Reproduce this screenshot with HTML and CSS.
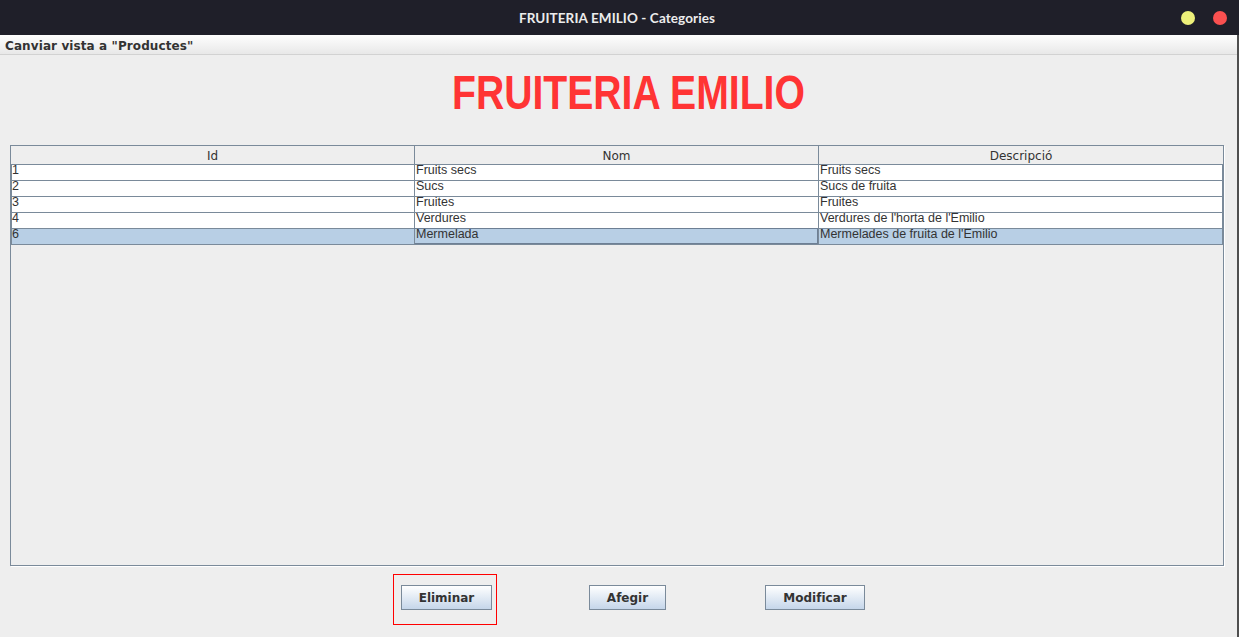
FILE: index.html
```html
<!DOCTYPE html>
<html lang="ca">
<head>
<meta charset="utf-8">
<title>FRUITERIA EMILIO - Categories</title>
<link rel="stylesheet" href="styles.css">
</head>
<body>
<div class="window">
  <header class="titlebar">
    <div class="titlebar-side"></div>
    <div class="title">FRUITERIA EMILIO - Categories</div>
    <div class="controls">
      <span class="dot dot-min"></span>
      <span class="dot dot-close"></span>
    </div>
  </header>
  <div class="frame">
    <div class="content">
      <div class="menubar"><span class="menu-item">Canviar vista a "Productes"</span></div>
      <div class="heading-wrap"><h1 class="heading">FRUITERIA EMILIO</h1></div>
      <div class="table">
        <div class="thead">
          <div class="th">Id</div>
          <div class="th">Nom</div>
          <div class="th">Descripció</div>
        </div>
        <div class="row">
          <div class="td"><span>1</span></div>
          <div class="td"><span>Fruits secs</span></div>
          <div class="td"><span>Fruits secs</span></div>
        </div>
        <div class="row">
          <div class="td"><span>2</span></div>
          <div class="td"><span>Sucs</span></div>
          <div class="td"><span>Sucs de fruita</span></div>
        </div>
        <div class="row">
          <div class="td"><span>3</span></div>
          <div class="td"><span>Fruites</span></div>
          <div class="td"><span>Fruites</span></div>
        </div>
        <div class="row">
          <div class="td"><span>4</span></div>
          <div class="td"><span>Verdures</span></div>
          <div class="td"><span>Verdures de l'horta de l'Emilio</span></div>
        </div>
        <div class="row selected">
          <div class="td"><span>6</span></div>
          <div class="td focused"><span>Mermelada</span></div>
          <div class="td"><span>Mermelades de fruita de l'Emilio</span></div>
        </div>
      </div>
      <div class="actions">
        <div class="highlight-box">
          <button class="btn btn-delete" type="button">Eliminar</button>
        </div>
        <button class="btn btn-add" type="button">Afegir</button>
        <button class="btn btn-edit" type="button">Modificar</button>
      </div>
    </div>
    <div class="edge"></div>
  </div>
</div>
</body>
</html>
```

FILE: styles.css
```css
html, body {
  margin: 0;
  padding: 0;
}

body {
  width: 1239px;
  height: 637px;
  overflow: hidden;
  background: #eeeeee;
  font-family: "DejaVu Sans", sans-serif;
}

.window {
  display: flex;
  flex-direction: column;
  height: 637px;
}

/* Title bar */
.titlebar {
  height: 35px;
  flex: 0 0 35px;
  background: #1f1f29;
  display: grid;
  grid-template-columns: 1fr auto 1fr;
  align-items: center;
}

.title {
  color: #ececec;
  font-family: "Lato", "DejaVu Sans", sans-serif;
  font-weight: 700;
  font-size: 13.5px;
  letter-spacing: 0.1px;
  margin-right: 5px;
}

.controls {
  justify-self: end;
  display: flex;
  gap: 18px;
  padding-right: 12px;
}

.dot {
  width: 14px;
  height: 14px;
  border-radius: 50%;
  display: block;
}

.dot-min {
  background: #edf07a;
}

.dot-close {
  background: #fa5050;
}

/* Frame */
.frame {
  flex: 1;
  display: flex;
}

.content {
  flex: 1;
  display: flex;
  flex-direction: column;
}

.edge {
  width: 2px;
  background: #4f4f4f;
}

/* Menu bar */
.menubar {
  height: 20px;
  box-sizing: border-box;
  background: linear-gradient(#fefefe, #e8e8e8);
  border-bottom: 1px solid #d2d2d2;
  padding-left: 5px;
  line-height: 19px;
}

.menu-item {
  font-family: "DejaVu Sans", sans-serif;
  font-weight: 700;
  font-size: 12px;
  letter-spacing: 0.1px;
  color: #333333;
}

/* Heading */
.heading-wrap {
  display: flex;
  justify-content: center;
  padding: 11px 0 0 20px;
  margin-bottom: 25px;
}

.heading {
  margin: 0;
  font-family: "Liberation Sans", Arial, sans-serif;
  font-weight: 700;
  font-size: 48px;
  line-height: 54px;
  color: #ff3434;
  transform: scaleX(0.815);
}

/* Table */
.table {
  margin: 0 13px 0 10px;
  height: 421px;
  box-sizing: border-box;
  border: 1px solid #7a8a9a;
  box-shadow: 1px 1px 0 #ffffff;
  background: #eeeeee;
  overflow: hidden;
}

.thead {
  display: grid;
  grid-template-columns: 403px 404px 405px;
  height: 19px;
  box-sizing: border-box;
  border-bottom: 1px solid #7a8a9a;
  background: #eeeeee;
}

.th {
  box-sizing: border-box;
  text-align: center;
  font-family: "DejaVu Sans", sans-serif;
  font-size: 12px;
  line-height: 18px;
  padding-top: 1px;
  height: 18px;
  color: #333333;
}

.th + .th {
  border-left: 1px solid #7a8a9a;
}

.row {
  display: grid;
  grid-template-columns: 403px 404px 405px;
  height: 16px;
  box-sizing: border-box;
  border-bottom: 1px solid #7a8a9a;
  background: #ffffff;
}

.td {
  box-sizing: border-box;
  border-left: 1px solid #7a8a9a;
  font-family: "Liberation Sans", Arial, sans-serif;
  font-size: 12.5px;
  line-height: 10px;
  color: #333333;
  white-space: nowrap;
}

.td:last-child {
  border-right: 1px solid #7a8a9a;
}

.td span {
  display: block;
  padding-left: 1px;
}

.td:first-child span {
  padding-left: 0;
}

.row.selected {
  background: #b8cfe5;
}

.td.focused {
  box-shadow: inset 0 -1px 0 #6d7f94, inset -1px 0 0 #6d7f94, 0 -1px 0 #6d7f94;
}

/* Actions */
.actions {
  display: flex;
  align-items: flex-start;
  padding-left: 393px;
  margin-top: 8px;
}

.highlight-box {
  border: 1px solid #ff0000;
  padding: 10px 4px 14px 7px;
}

.btn {
  display: block;
  height: 25px;
  box-sizing: border-box;
  border: 1px solid #7a8a9a;
  border-radius: 0;
  background: linear-gradient(#ffffff, #c5d6ea);
  font-family: "DejaVu Sans", sans-serif;
  font-weight: 700;
  font-size: 12px;
  color: #333333;
  padding: 0;
  margin: 0;
  text-align: center;
}

.btn-delete {
  width: 91px;
}

.btn-add {
  width: 77px;
  margin-left: 92px;
  margin-top: 11px;
}

.btn-edit {
  width: 100px;
  margin-left: 99px;
  margin-top: 11px;
}
```
